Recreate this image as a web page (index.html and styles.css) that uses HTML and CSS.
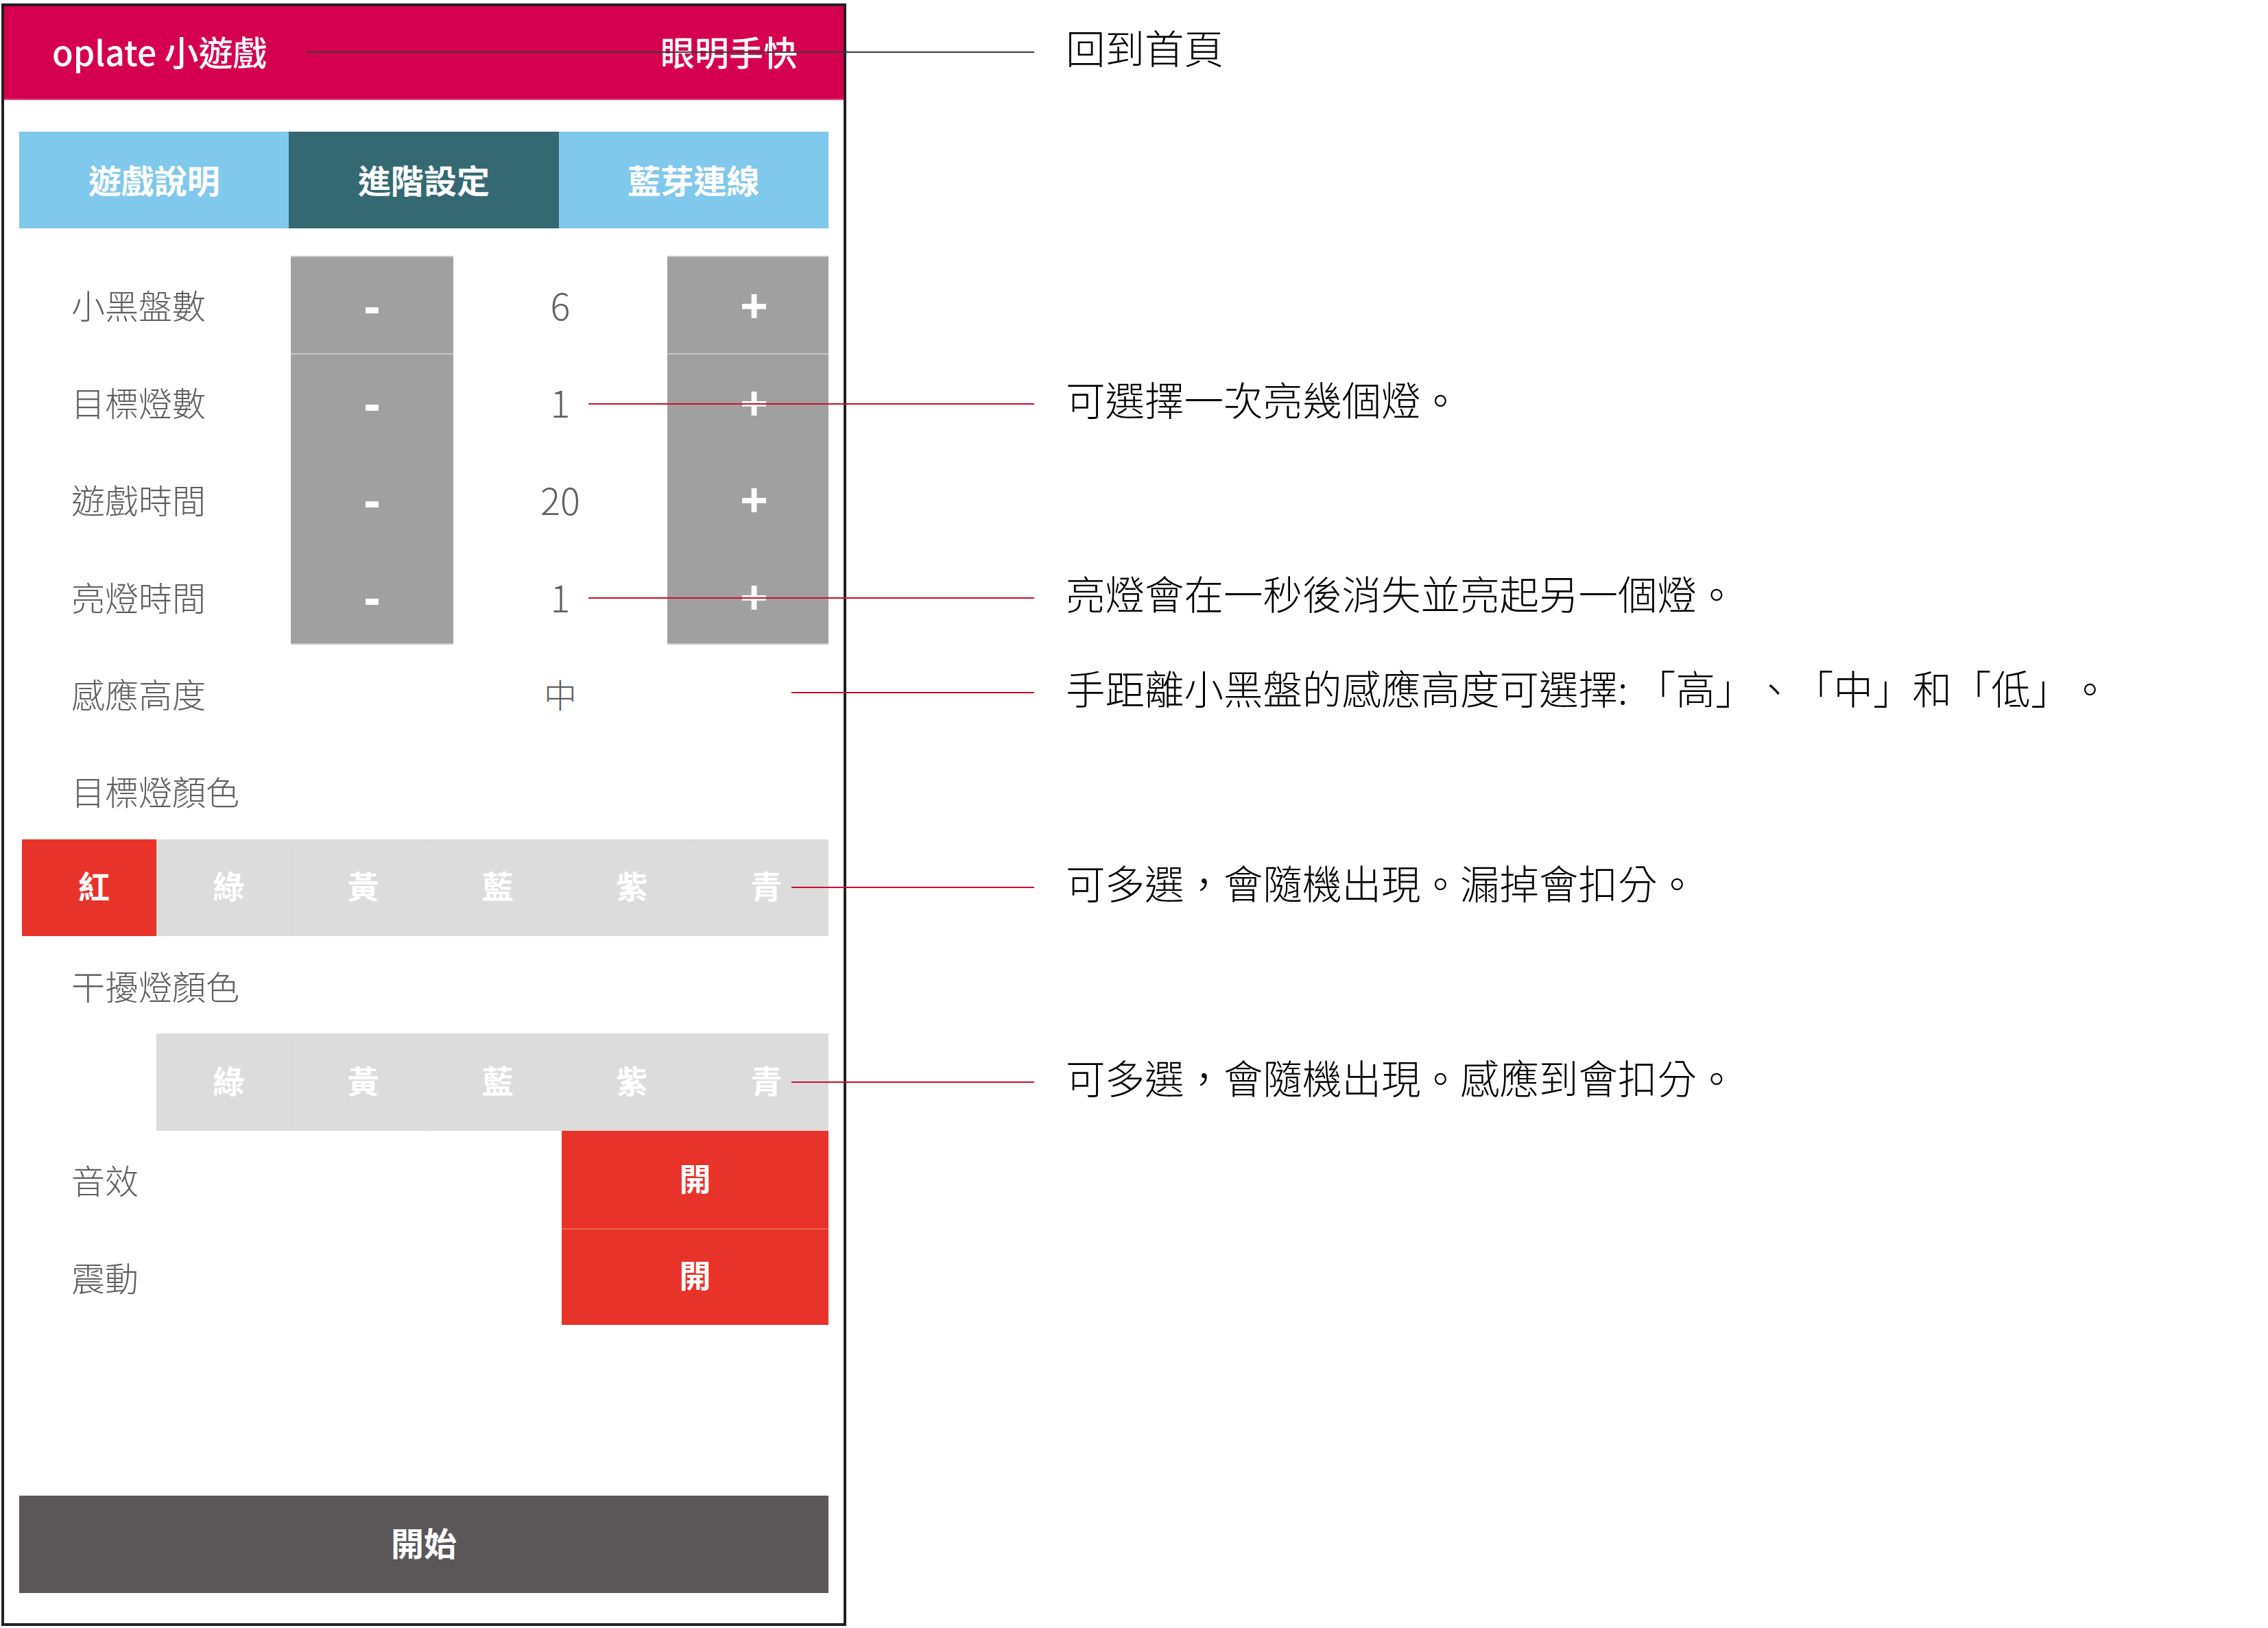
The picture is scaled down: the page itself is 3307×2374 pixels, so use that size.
FILE: index.html
```html
<!DOCTYPE html>
<html lang="zh-Hant">
<head>
    <meta charset="UTF-8" />
    <meta name="viewport" content="width=device-width, initial-scale=1" />
    <title>oplate 小遊戲 - 進階設定</title>
    <link rel="stylesheet" href="styles.css">
</head>
<body>
    <div class="phone">
        <header class="topbar">
            <span class="brand">oplate 小遊戲</span>
            <span class="game-name">眼明手快</span>
            <div class="callout callout-home"><i class="line"></i><span class="note">回到首頁</span></div>
        </header>

        <nav class="tabs">
            <a class="tab">遊戲說明</a>
            <a class="tab active">進階設定</a>
            <a class="tab">藍芽連線</a>
        </nav>

        <section class="settings">
            <div class="row stepper first">
                <span class="label">小黑盤數</span>
                <span class="step">-</span>
                <span class="value">6</span>
                <span class="step plus">+</span>
            </div>
            <div class="row stepper">
                <span class="label">目標燈數</span>
                <span class="step">-</span>
                <span class="value">1</span>
                <span class="step plus">+</span>
                <div class="callout callout-step"><i class="line red"></i><span class="note">可選擇一次亮幾個燈。</span></div>
            </div>
            <div class="row stepper no-top">
                <span class="label">遊戲時間</span>
                <span class="step">-</span>
                <span class="value">20</span>
                <span class="step plus">+</span>
            </div>
            <div class="row stepper last">
                <span class="label">亮燈時間</span>
                <span class="step">-</span>
                <span class="value">1</span>
                <span class="step plus">+</span>
                <div class="callout callout-step"><i class="line red"></i><span class="note">亮燈會在一秒後消失並亮起另一個燈。</span></div>
            </div>

            <div class="row stepper plain">
                <span class="label">感應高度</span>
                <span></span>
                <span class="value word">中</span>
                <span></span>
                <div class="callout callout-side"><i class="line red"></i><span class="note">手距離小黑盤的感應高度可選擇: 「高」、「中」和「低」。</span></div>
            </div>

            <div class="row">
                <span class="label">目標燈顏色</span>
            </div>
            <div class="colors">
                <span class="chip on">紅</span>
                <span class="chip">綠</span>
                <span class="chip">黃</span>
                <span class="chip">藍</span>
                <span class="chip">紫</span>
                <span class="chip">青</span>
                <div class="callout callout-chip"><i class="line red"></i><span class="note">可多選，會隨機出現。漏掉會扣分。</span></div>
            </div>

            <div class="row">
                <span class="label">干擾燈顏色</span>
            </div>
            <div class="colors no-red">
                <span class="chip">綠</span>
                <span class="chip">黃</span>
                <span class="chip">藍</span>
                <span class="chip">紫</span>
                <span class="chip">青</span>
                <div class="callout callout-chip"><i class="line red"></i><span class="note">可多選，會隨機出現。感應到會扣分。</span></div>
            </div>

            <div class="row switch">
                <span class="label">音效</span>
                <span class="toggle">開</span>
            </div>
            <div class="row switch second">
                <span class="label">震動</span>
                <span class="toggle">開</span>
            </div>
        </section>

        <button class="start">開始</button>
    </div>
</body>
</html>
```

FILE: styles.css
```css
body {
    margin: 0;
    padding: 5px 0 0 2px;
    background: #fff;
    font-family: "Noto Sans CJK TC", "Noto Sans", sans-serif;
}

.phone {
    width: 1232px;
    height: 2366px;
    box-sizing: border-box;
    border: 4px solid #231f20;
    display: flex;
    flex-direction: column;
    background: #fff;
}

/* barra superior */
.topbar {
    position: relative;
    height: 137px;
    background: #d5004f;
    box-shadow: inset 0 -2px #e34d85;
    display: flex;
    align-items: center;
    justify-content: space-between;
    padding: 0 67px 8px 70px;
    box-sizing: border-box;
    color: #fff;
    font-size: 50px;
    font-weight: 500;
}

/* pestañas */
.tabs {
    display: flex;
    height: 141px;
    margin: 46px 22px 0;
}
.tab {
    flex: 1;
    display: flex;
    align-items: center;
    justify-content: center;
    padding-bottom: 4px;
    background: #80c8ec;
    color: #fff;
    font-size: 48px;
    font-weight: 700;
}
.tab.active {
    background: #346973;
}

/* filas de ajustes */
.settings {
    margin: 40px 22px 0;
}
.row {
    position: relative;
    height: 141.75px;
    display: flex;
    align-items: center;
}
.label {
    padding-left: 76px;
    font-size: 49px;
    font-weight: 300;
    color: #5f5f5f;
}
.stepper {
    display: grid;
    grid-template-columns: 396px 237px 1fr 235px;
    align-items: stretch;
}
.stepper .label,
.stepper .value {
    display: flex;
    align-items: center;
}
.step {
    display: flex;
    align-items: center;
    justify-content: center;
    background: #a0a0a0;
    color: #fff;
    font-family: "Noto Sans", sans-serif;
    font-size: 72px;
    font-weight: 700;
    box-shadow: inset 0 2px #c6c6c6;
}
.step.plus {
    padding-left: 18px;
}
.stepper.no-top .step {
    box-shadow: none;
}
.stepper.last .step {
    box-shadow: inset 0 -2px #c6c6c6;
}
.value {
    justify-content: center;
    font-size: 54px;
    font-weight: 300;
    color: #5f5f5f;
}
.value.word {
    font-size: 48px;
}

/* colores */
.colors {
    position: relative;
    display: grid;
    grid-template-columns: repeat(6, 1fr);
    height: 141.75px;
    margin-left: 4px;
}
.chip {
    display: flex;
    align-items: center;
    justify-content: center;
    padding: 0 0 8px 14px;
    background: #dcdcdc;
    border-left: 1px solid #d7d7d7;
    color: #fff;
    font-size: 46px;
    font-weight: 700;
}
.chip.on {
    background: #e8332a;
    border-left: none;
}
.colors.no-red .chip:first-child {
    grid-column-start: 2;
}

/* interruptores */
.switch {
    display: grid;
    grid-template-columns: 1fr 389px;
    align-items: stretch;
}
.switch .label {
    display: flex;
    align-items: center;
}
.toggle {
    display: flex;
    align-items: center;
    justify-content: center;
    padding-bottom: 8px;
    background: #e8332a;
    color: #fff;
    font-size: 46px;
    font-weight: 700;
}
.switch.second .toggle {
    box-shadow: inset 0 2px #ec6a48;
}

.start {
    margin: auto 22px 44px;
    height: 142px;
    padding: 0 0 8px;
    border: none;
    background: #5b5758;
    color: #fff;
    font-family: inherit;
    font-size: 48px;
    font-weight: 700;
}

/* anotaciones */
.callout {
    position: absolute;
    top: 50%;
    display: flex;
    align-items: center;
    transform: translateY(-50%);
    z-index: 2;
    pointer-events: none;
}
.callout .line {
    display: block;
    height: 2px;
    background: #3a3a3a;
}
.callout .line.red {
    background: #c4122f;
}
.callout .note {
    margin: 0 0 16px 46px;
    font-size: 57.5px;
    font-weight: 300;
    color: #000;
    white-space: nowrap;
    text-spacing-trim: space-all;
}
.callout-home {
    left: 441px;
    margin-top: -2px;
}
.callout-home .line { width: 1061px; }
.callout-step {
    left: 830px;
    margin-top: 3px;
}
.callout-step .line { width: 650px; }
.callout-side {
    left: 1126px;
    margin-top: -1px;
}
.callout-side .line { width: 354px; }
.callout-chip {
    left: 1122px;
}
.callout-chip .line { width: 354px; }
```
